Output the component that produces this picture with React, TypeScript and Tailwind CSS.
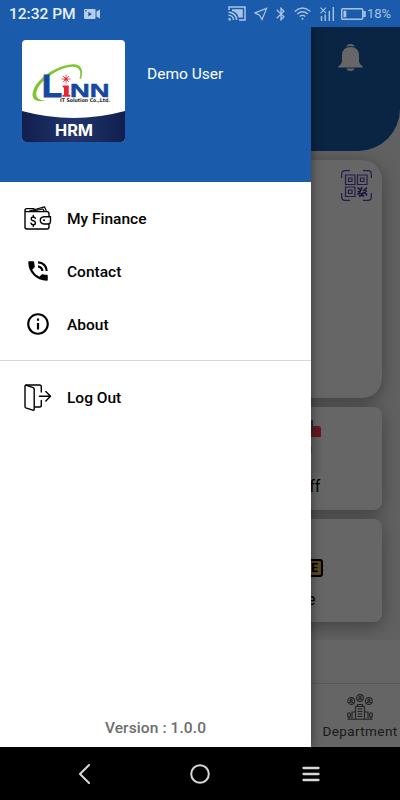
import { MdPhoneInTalk, MdInfoOutline, MdBluetooth } from 'react-icons/md';

const WalletIcon = () => (
  <svg width="28" height="26" viewBox="0 0 28 26" fill="none" stroke="#000" strokeWidth="1.4" strokeLinejoin="round" strokeLinecap="round">
    <path d="M25 10V7.8Q25 5.6 23 5.6H3Q1 5.6 1 3.9Q1 2.6 3 2.6H10M1 4V21Q1 23 3 23H23Q25 23 25 21V18.5" />
    <path d="M5.5 5L20.5 .8L22.5 5.2M9.5 5L19 3L20 5" strokeWidth="1.2" />
    <path d="M26.5 10.8H20Q16.3 11.2 16.3 14.3Q16.3 17.5 20 18H24.5Q26.5 17.5 26.5 15.5Z" />
    <circle cx="20" cy="14.3" r="1" fill="#000" stroke="none" />
    <path d="M11.3 12.3Q10.9 11 9.3 11Q7.2 11 7.2 13Q7.2 14.4 9.3 14.8Q11.4 15.3 11.4 17Q11.4 18.8 9.3 18.8Q7.4 18.8 7 17.3M9.3 9.5V11M9.3 18.8V20.4" />
  </svg>
);

const LogOutIcon = () => (
  <svg width="28" height="28" viewBox="0 0 28 28" fill="none" stroke="#000" strokeWidth="1.4" strokeLinejoin="round" strokeLinecap="round">
    <path d="M1 2.2Q1 1 2.5 1.4L9.2 3.6Q10.2 4 10.2 5V25Q10.2 26.7 8.8 26.2L1.8 23.8Q1 23.5 1 22.5Z" />
    <path d="M2 1H15.5Q17.3 1 17.3 2.8V8M17.3 16.5V21.2Q17.3 23 15.5 23H11" />
    <path d="M15.5 12.2H26.3M21.8 7.5L26.5 12.2L21.8 16.9" />
  </svg>
);

const menu = [
  { label: 'My Finance', icon: <WalletIcon /> },
  { label: 'Contact', icon: <MdPhoneInTalk size={26} className="ml-px -mt-px" /> },
  { label: 'About', icon: <MdInfoOutline size={26} className="ml-px -mt-px" /> },
];

function StatusBar() {
  return (
    <div className="h-[27px] shrink-0 bg-[#1a5cab] flex items-center pl-[9px] pr-[9px] text-[#a9c3e4]">
      <span className="text-[15.5px] font-medium text-[#e8f0fa] w-[75px] whitespace-nowrap pt-[2px]">12:32 PM</span>
      <svg width="16" height="10" viewBox="0 0 16 10" fill="#b5cdea">
        <path fillRule="evenodd" d="M1 0H10.5Q11.5 0 11.5 1V9Q11.5 10 10.5 10H1Q0 10 0 9V1Q0 0 1 0ZM4.3 2.8V7.4L8 5.1ZM1.2 1V2.4H2.6V1Z" />
        <path d="M12.5 2.5L16 .5V9.5L12.5 7.5Z" />
      </svg>
      <div className="ml-auto flex items-center">
        <svg width="18" height="15" viewBox="0 0 18 15" fill="none" stroke="currentColor" strokeWidth="1.5">
          <path d="M1 4V1H17V14H11" />
          <path d="M4 3.2H14.8V11.5H10.5Q9.5 6.2 4 5Z" fill="currentColor" stroke="none" />
          <path d="M.5 6.2A8 8 0 0 1 8.7 14M.5 9.2A5 5 0 0 1 5.6 14" />
          <path d="M.5 11.8A2.5 2.5 0 0 1 3 14.4H.5Z" fill="currentColor" stroke="none" />
        </svg>
        <svg className="ml-[8px]" width="14" height="14" viewBox="0 0 15 14" fill="none" stroke="currentColor" strokeWidth="1.3">
          <path d="M13.5 1L.9 5.8L6 8.2L8.6 13Z" />
        </svg>
        <MdBluetooth size={16} className="ml-[5px]" />
        <svg className="ml-[5px]" width="17" height="13" viewBox="0 0 17 13" fill="none" stroke="currentColor" strokeWidth="1.3">
          <path d="M.7 4.5Q8.5-2.5 16.3 4.5M3.2 7.1Q8.5 2.5 13.8 7.1M5.7 9.6Q8.5 7.2 11.3 9.6" />
          <circle cx="8.5" cy="11.7" r="1" fill="currentColor" stroke="none" />
        </svg>
        <svg className="ml-[9px]" width="15" height="14" viewBox="0 0 15 14" fill="none" stroke="currentColor" strokeWidth="1.4">
          <path d="M1.5 9V14M5.2 7.5V14M9.3 4V14M13.3 0V14" />
          <path d="M.5 .7L6 6.2M6 .7L.5 6.2" strokeWidth="1.1" />
        </svg>
        <svg className="ml-[6px]" width="25" height="12" viewBox="0 0 25 12" fill="none" stroke="currentColor" strokeWidth="1.4">
          <rect x=".7" y=".7" width="21" height="10.6" rx="1" />
          <path d="M2.5 2.7H5.3V9.3H2.5Z" fill="currentColor" stroke="none" />
          <path d="M23.5 3V9" strokeWidth="2.4" />
        </svg>
        <span className="text-[13px] ml-px w-[24px] whitespace-nowrap">18%</span>
      </div>
    </div>
  );
}

function Logo() {
  return (
    <svg width="103" height="102" viewBox="0 0 103 102" className="rounded-[4px]">
      <defs>
        <linearGradient id="navy" x1="0" x2="1">
          <stop offset="0" stopColor="#101f4d" />
          <stop offset=".5" stopColor="#22346c" />
          <stop offset="1" stopColor="#101f4d" />
        </linearGradient>
      </defs>
      <rect width="103" height="102" fill="#fff" />
      <path d="M0 71Q51.5 85 103 71V102H0Z" fill="url(#navy)" />
      <path d="M59 39C62 30 59 24 51 24.3C37 25 17 36 11.5 50C8 59 14 62.5 24 60.8C16 60 12.5 57 15 50C20 38 39 27 50 26.7C57 26.5 60 31 57.5 38.5Z" fill="#7cc62f" />
      <text x="20" y="56.5" fontFamily="Liberation Sans" fontWeight="700" fontSize="31" fill="#17479e" stroke="#17479e" strokeWidth="1" textLength="20" lengthAdjust="spacingAndGlyphs">L</text>
      <path d="M40.7 45.5h6v9.3h1.6v2h-7.8v-2h1.5v-7.3h-1.3z" fill="#e52530" />
      <path d="M44 34.5V43.5M39.5 39H48.5M41 36L47 42M47 36L41 42" stroke="#e52530" strokeWidth=".8" />
      <circle cx="44" cy="39" r="1.6" fill="#e52530" />
      <text x="48" y="56.5" fontFamily="Liberation Sans" fontWeight="700" fontSize="18.5" fill="#17479e" stroke="#17479e" strokeWidth=".5" textLength="39.5" lengthAdjust="spacingAndGlyphs">NN</text>
      <text x="38" y="62" fontFamily="DejaVu Sans" fontWeight="700" fontSize="5" fill="#222" textLength="50" lengthAdjust="spacingAndGlyphs">IT Solution Co.,Ltd.</text>
      <text x="33" y="96.3" fontFamily="Inter" fontWeight="700" fontSize="16" fill="#fff" textLength="38" lengthAdjust="spacingAndGlyphs">HRM</text>
    </svg>
  );
}

function QrIcon() {
  return (
    <svg width="31" height="31" viewBox="0 0 31 31" fill="none" stroke="#5a41b4" strokeWidth="1.2">
      <path d="M.7 8V4Q.7 .7 4 .7H9M22 .7H27Q30.3 .7 30.3 4V8M30.3 23V27Q30.3 30.3 27 30.3H22M9 30.3H4Q.7 30.3 .7 27V23" />
      <path d="M4.5 5H14V14.5H4.5ZM16.5 5H26V14.5H16.5ZM4.5 17H14V26.5H4.5Z" />
      <path d="M7.5 8H11V11.5H7.5ZM19.5 8H23V11.5H19.5ZM7.5 20H11V23.5H7.5Z" />
      <path d="M16.5 17.5L20 20.5M21 17L19 22L16.5 21.5M22 21L26 17.5M23 19.5L26 21.5M20 24L24 22.5L26 25.5M16.5 24.5L19.5 23M18 26.5L21.5 25L23 26.5" stroke="#3a2498" strokeWidth="1.5" />
    </svg>
  );
}

function DepartmentIcon() {
  return (
    <svg width="26" height="26" viewBox="0 0 26 26" fill="none" stroke="#555" strokeWidth="1.1">
      <circle cx="13" cy="4" r="3.4" />
      <circle cx="4.2" cy="7" r="3.4" />
      <circle cx="21.8" cy="7" r="3.4" />
      <path d="M11 6Q13 3.8 15 6M2.2 9Q4.2 6.8 6.2 9M19.8 9Q21.8 6.8 23.8 9" />
      <circle cx="13" cy="3.3" r="1" />
      <circle cx="4.2" cy="6.3" r="1" />
      <circle cx="21.8" cy="6.3" r="1" />
      <path d="M8.5 25V12.5H17.5V25M10.5 12.5V10.5H15.5V12.5M8.5 18H5V25M17.5 18H21V25M.5 25.3H25.5M10.5 15H15.5M10.5 17.5H15.5M10.5 20H15.5M10.5 22.5H15.5M2 25V23M24 25V23" />
      <ellipse cx="2" cy="21" rx="1.4" ry="2.3" />
      <ellipse cx="24" cy="21" rx="1.4" ry="2.3" />
    </svg>
  );
}

function HomePage() {
  return (
    <div className="h-full flex flex-col bg-[#fcfcfc]">
      <div className="h-[613px] shrink-0 overflow-hidden bg-[#f2f2f2]">
        <div className="h-[124px] bg-[#1a5cab] rounded-br-[42px] flex justify-end pt-[16px] pr-[37px]">
          <svg width="25" height="29" viewBox="0 0 25 29" fill="#fff">
            <path d="M8.3 3.6Q9 1 12.5 1Q16 1 16.7 3.6Q14.8 3 12.5 3Q10.2 3 8.3 3.6Z" />
            <path d="M12.5 4Q20.5 4 21 12V18Q21.3 21.5 24.6 23V24.5H.4V23Q3.7 21.5 4 18V12Q4.5 4 12.5 4ZM8.3 25.5H16.7Q15.5 28 12.5 28Q9.5 28 8.3 25.5Z" />
          </svg>
        </div>
        <div className="mt-[9px] mr-[18px] ml-[18px] h-[238px] rounded-[20px] bg-white shadow-[0_4px_18px_rgba(0,0,0,0.35)] flex justify-end pt-[10px] pr-[10px]">
          <QrIcon />
        </div>
        <div className="mt-[9px] mr-[18px] ml-[206px] h-[103px] rounded-[8px] bg-white shadow-[0_4px_18px_rgba(0,0,0,0.35)] flex flex-col items-center">
          <svg className="mt-[12px] ml-[5px] shrink-0" width="50" height="54" viewBox="0 0 50 54">
            <path d="M0 7H46Q49 7 49 10V18H0Z" fill="#ff3b4b" />
            <rect x="34" y="1" width="7" height="11" fill="#56758c" />
            <path d="M0 18H49V54H0Z" fill="#f8f5f5" />
            <rect x="30" y="28" width="10" height="6" fill="#eea080" />
          </svg>
          <span className="ml-[18px] text-[16px] leading-[28px]">Staff</span>
        </div>
        <div className="mt-[9px] mr-[18px] ml-[206px] h-[103px] rounded-[8px] bg-white shadow-[0_4px_18px_rgba(0,0,0,0.35)] flex flex-col items-center">
          <div className="mt-[40px] ml-[2px] h-[18px] w-[56px] shrink-0 rounded-[3px] border-2 border-black bg-[#e4b553] text-right pr-[3px] text-[12px] leading-[15px] font-bold">LEAVE</div>
          <span className="mt-[9px] ml-px text-[16px] leading-[28px]">Leave</span>
        </div>
      </div>
      <div className="mt-[43px] h-[64px] shrink-0 border-t border-[#ddd] flex justify-end">
        <div className="w-[80px] flex flex-col items-center pt-[10px]">
          <DepartmentIcon />
          <span className="text-[13.5px] leading-[20px] mt-px tracking-[0.4px] text-[#444] whitespace-nowrap">Department</span>
        </div>
      </div>
    </div>
  );
}

function Drawer() {
  return (
    <aside className="absolute inset-y-0 left-0 w-[311px] bg-white flex flex-col shadow-[0_0_10px_rgba(0,0,0,0.5)]">
      <div className="h-[155px] shrink-0 bg-[#1a5cab] flex items-start pl-[22px] pt-[13px]">
        <Logo />
        <span className="ml-[22px] mt-[24px] text-[15.5px] leading-[20px] text-white">Demo User</span>
      </div>
      <nav className="pt-[10px] pb-[9px] border-b border-[#d8d8d8]">
        {menu.map((item) => (
          <div key={item.label} className="h-[53px] flex items-center pl-[24px]">
            <span className="w-[43px]">{item.icon}</span>
            <span className="pt-[2px] text-[15.5px] font-medium text-black">{item.label}</span>
          </div>
        ))}
      </nav>
      <div className="mt-[10px] h-[53px] flex items-center pl-[24px]">
        <span className="w-[43px]"><LogOutIcon /></span>
        <span className="pt-[2px] text-[15.5px] font-medium text-black">Log Out</span>
      </div>
      <p className="mt-auto mb-[9px] text-center text-[15.5px] leading-[20px] font-medium text-[#6d6d6d] tracking-[0.1px]">Version : 1.0.0</p>
    </aside>
  );
}

export default function App() {
  return (
    <div className="w-[400px] h-[800px] overflow-hidden flex flex-col bg-black font-[Roboto,sans-serif]">
      <StatusBar />
      <main className="relative h-[720px] shrink-0 overflow-hidden">
        <HomePage />
        <div className="absolute inset-0 bg-black/60" />
        <Drawer />
      </main>
      <div className="h-[53px] shrink-0 bg-black flex items-center pl-[78px]">
        <svg width="12" height="20" viewBox="0 0 12 20" fill="none" stroke="#d8d8d8" strokeWidth="2" strokeLinecap="round" strokeLinejoin="round">
          <path d="M11 1L2 10L11 19" />
        </svg>
        <svg className="ml-[100px]" width="20" height="20" viewBox="0 0 20 20" fill="none" stroke="#d8d8d8" strokeWidth="2">
          <circle cx="10" cy="10" r="8.8" />
        </svg>
        <svg className="ml-[92px]" width="18" height="16" viewBox="0 0 18 16" stroke="#d8d8d8" strokeWidth="2.3" strokeLinecap="round">
          <path d="M1.5 2H16.5M1.5 8H16.5M1.5 14H16.5" />
        </svg>
      </div>
    </div>
  );
}
